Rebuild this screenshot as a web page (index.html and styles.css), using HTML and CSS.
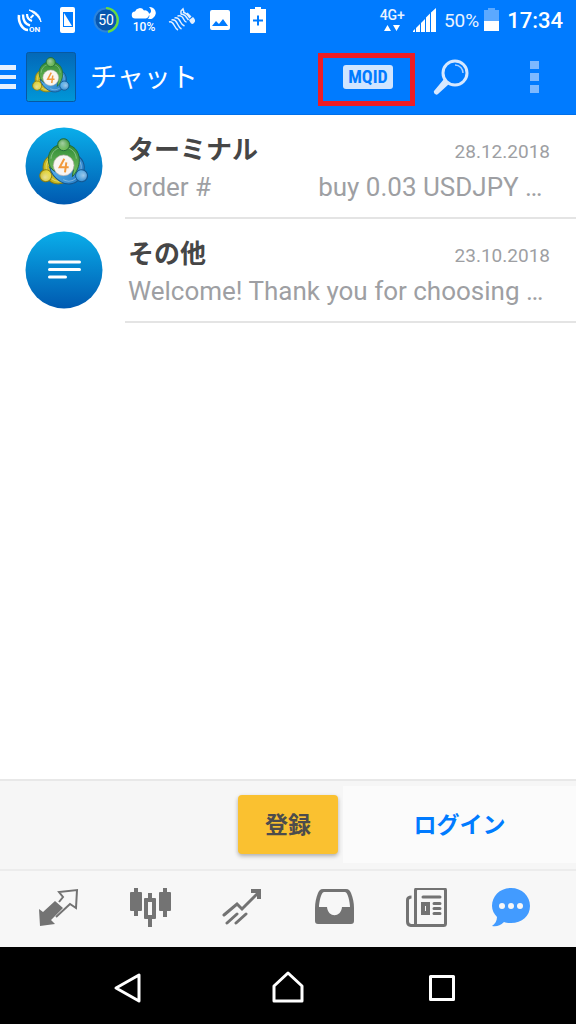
FILE: index.html
```html
<!DOCTYPE html>
<html lang="ja">
<head>
<meta charset="utf-8">
<meta name="viewport" content="width=device-width, initial-scale=1">
<title>チャット</title>
<link rel="stylesheet" href="styles.css">
</head>
<body>
<svg class="defs" aria-hidden="true">
  <defs>
    <linearGradient id="sky" x1="0" y1="0" x2="0" y2="1"><stop offset="0" stop-color="#0aaeea"/><stop offset="1" stop-color="#0059b0"/></linearGradient>
    <linearGradient id="tile" x1="0" y1="0" x2="0" y2="1"><stop offset="0" stop-color="#0368b8"/><stop offset="1" stop-color="#0097d8"/></linearGradient>
    <linearGradient id="green" x1="0" y1="0" x2="0" y2="1"><stop offset="0" stop-color="#2f8a35"/><stop offset="1" stop-color="#7cc563"/></linearGradient>
    <linearGradient id="yellow" x1="0" y1="0" x2="0" y2="1"><stop offset="0" stop-color="#c4b31a"/><stop offset="1" stop-color="#eee04a"/></linearGradient>
    <linearGradient id="blue" x1="0" y1="0" x2="0" y2="1"><stop offset="0" stop-color="#2a80c8"/><stop offset="1" stop-color="#5cb4ec"/></linearGradient>
    <radialGradient id="shine" cx=".4" cy=".35" r=".6"><stop offset="0" stop-color="#fff" stop-opacity=".5"/><stop offset="1" stop-color="#fff" stop-opacity="0"/></radialGradient>
    <g id="member">
      <path d="M74 20C46 18 28 38 28 64c0 15 7 28 18 35 2-24 12-39 28-39s30 14 29 36l-3 20c14-14 21-32 21-50 0-28-19-48-47-46z" stroke-width="3"/>
      <path d="M36 62c1-18 12-28 24-32M112 62c-1-18-12-28-24-32" fill="none" stroke="#fff" stroke-opacity=".35" stroke-width="3"/>
      <circle cx="74" cy="20" r="18" stroke-width="3"/>
      <circle cx="74" cy="20" r="16" fill="url(#shine)" stroke="none"/>
    </g>
    <symbol id="logo" viewBox="0 0 150 150">
      <use href="#member" fill="url(#yellow)" stroke="#8a7c16" transform="rotate(240 74 82)"/>
      <use href="#member" fill="url(#blue)" stroke="#14568f" transform="rotate(120 74 82)"/>
      <use href="#member" fill="url(#green)" stroke="#246b38"/>
      <circle cx="74" cy="82" r="31" fill="#f8f5f2" stroke="#b9b0ac" stroke-width="2"/>
      <path d="M76 62L62 88h27M82 73l-4 30" fill="none" stroke="#f19a3c" stroke-width="6"/>
    </symbol>
  </defs>
</svg>
<div class="screen">
  <header class="top">
    <div class="status">
      <div class="notices">
        <svg viewBox="0 0 26 28"><g fill="none" stroke="#fff"><path d="M2 9c-1 8 4 15 9 15" stroke-width="2.600"/><path d="M6 8.500c0 6 3 10 7 11" stroke-width="2.400"/><path d="M10 8c0 4 2 6 5 7" stroke-width="2.200"/><path d="M13.500 12l3-3" stroke-width="2"/></g><path fill="#fff" d="M12 4c7 1 11 5 12 12-2-5-7-9-12-12z" stroke="#fff"/><text x="12" y="26" class="tiny">ON</text></svg>
        <svg viewBox="0 0 26 28"><path fill="#fff" fill-rule="evenodd" d="M7 1h11a2 2 0 0 1 2 2v22a2 2 0 0 1-2 2H7a2 2 0 0 1-2-2V3a2 2 0 0 1 2-2zm1 5v15h10V6z"/><path fill="#fff" d="M9 7l8 13H9z"/></svg>
        <svg viewBox="0 0 26 28"><circle cx="13" cy="14" r="11.500" fill="#0757b0" stroke="#2b84dc" stroke-width="2"/><path d="M13 2a12 12 0 0 1 2 23.800" fill="none" stroke="#69dc3e" stroke-width="2.200"/><text x="13" y="19" text-anchor="middle" class="count">50</text></svg>
        <svg viewBox="0 0 26 28"><path fill="#fff" d="M4.500 12.500a3.500 3.500 0 0 1-.5-7 5 5 0 0 1 9-1 4 4 0 0 1 2 8z"/><path fill="#fff" d="M18 1a6 6 0 1 1-1.500 11.500c2-.5 2.500-3 1-4.500 3-1 3.500-4 .500-7z"/><text x="13" y="25" text-anchor="middle" class="rain">10%</text></svg>
        <svg viewBox="0 0 26 28"><g fill="none" stroke="#e2efff" stroke-width="1.500"><path d="M0 16c3-1 4 1 5 3s2 4 4 5M2.500 14c4-1 5 2 6 4s2 4 4 5M5.500 12c4-1 5 2 6 4s2 3 4 4M8.500 10c4-1 5 1 6 3s2 3 3 3M11.500 8c3 0 4 1 5 2l3 4M14 6c3 1 5 3 7 6M12 8V5l2-2 1 3M18 7l4 4"/></g><path fill="#e2efff" d="M20 14l4-3c2 2 3 4 1 6s-3 1-5-3z"/></svg>
        <svg viewBox="0 0 26 28"><path fill="#fff" fill-rule="evenodd" d="M5 4h16a2 2 0 0 1 2 2v16a2 2 0 0 1-2 2H5a2 2 0 0 1-2-2V6a2 2 0 0 1 2-2zm0 16h16l-5-7-4 5-3-3z"/></svg>
        <svg viewBox="0 0 26 28"><path fill="#fff" fill-rule="evenodd" d="M10 1h6v2h5v24H5V3h5zm2 8.500v4H8v2h4v4h2v-4h4v-2h-4v-4z"/></svg>
      </div>
      <div class="system">
        <div class="network"><span>4G+</span><svg viewBox="0 0 18 8"><path fill="#fff" d="M1 7l3.500-6L8 7zM10 1h7l-3.500 6z"/></svg></div>
        <svg class="signal" viewBox="0 0 23 24"><path fill="#fff" d="M0 24v-1l2-2v3zM3 24v-4l4-4v8zM8 24v-9l4-4v13zM13 24V9.500l4-4V24zM18 24V4.500L23 0v24z"/></svg>
        <span class="percent">50%</span>
        <svg class="battery" viewBox="0 0 15 24"><path fill="#5ca9ff" d="M4 0h7v2h4v11H0V2h4z"/><path fill="#fff" d="M0 13h15v10H0z"/></svg>
        <time class="clock">17:34</time>
      </div>
    </div>
    <div class="appbar">
      <button class="menu" aria-label="メニュー"><svg viewBox="0 0 16 24"><path fill="#e4f0ff" d="M0 0h16v5H0zM0 10h16v4H0zM0 19h16v5H0z"/></svg></button>
      <svg class="app-icon" viewBox="0 0 50 50"><rect x=".5" y=".5" width="49" height="49" rx="2" fill="url(#tile)" stroke="#0759a2"/><use href="#logo" x="6" y="5" width="38" height="38"/></svg>
      <h1>チャット</h1>
      <button class="mqid"><span>MQID</span></button>
      <button class="search" aria-label="検索"><svg viewBox="0 0 36 36"><circle cx="22" cy="14" r="12" fill="none" stroke="#d6e8ff" stroke-width="3"/><path d="M22 6c5 0 8 4 8 8" fill="none" stroke="#a9d0ff" stroke-width="1.500"/><path fill="#d6e8ff" d="M11 20l5 5L5 35c-2 2-5-1-4-3z"/></svg></button>
      <button class="more" aria-label="その他のオプション"><svg viewBox="0 0 9 32"><path fill="#7db9ff" d="M0 0h9v8H0zM0 12h9v8H0zM0 24h9v8H0z"/></svg></button>
    </div>
  </header>
  <main>
    <a class="chat" href="#terminal">
      <svg class="avatar" viewBox="0 0 78 78"><circle cx="39" cy="39" r="38.500" fill="url(#sky)"/><use href="#logo" x="14" y="11" width="50" height="50"/></svg>
      <div class="body">
        <div class="line"><h2>ターミナル</h2><time>28.12.2018</time></div>
        <p>order #<span class="hidden-number"></span>buy 0.03 USDJPY …</p>
      </div>
    </a>
    <a class="chat" href="#other">
      <svg class="avatar" viewBox="0 0 78 78"><circle cx="39" cy="39" r="38.500" fill="url(#sky)"/><path d="M24.500 31h30M24.500 38.500h30M24.500 46h16" stroke="#fff" stroke-width="3" stroke-linecap="round"/></svg>
      <div class="body">
        <div class="line"><h2>その他</h2><time>23.10.2018</time></div>
        <p>Welcome! Thank you for choosing …</p>
      </div>
    </a>
  </main>
  <div class="account">
    <button class="register">登録</button>
    <button class="login">ログイン</button>
  </div>
  <nav class="tabs">
    <a href="#quotes" aria-label="気配値"><svg viewBox="0 0 42 42"><path fill="#737373" d="M1 20l4 3 12-11 8 7-12 12 4 4-15 2z" transform="translate(0 1)"/><path fill="none" stroke="#737373" stroke-width="2" d="M21 14l4-5-4-5 18-2-1 18-6-4-14 13"/></svg></a>
    <a href="#charts" aria-label="チャート"><svg viewBox="0 0 42 42"><path fill="#737373" fill-rule="evenodd" d="M4 0h4v4h3q1 0 1 1v17q0 1-1 1H8v5H4v-5H1q-1 0-1-1V5q0-1 1-1h3zM33 0h4v4h3q1 0 1 1v17q0 1-1 1h-3v6h-4v-6h-3q-1 0-1-1V5q0-1 1-1h3zM18 5h4v5h3q1 0 1 1v19q0 1-1 1h-3v8h-4v-8h-3q-1 0-1-1V11q0-1 1-1h3zm0 9v13h4V14z"/></svg></a>
    <a href="#trade" aria-label="トレード"><svg viewBox="0 0 42 42"><g fill="none" stroke="#737373" stroke-width="3" stroke-linecap="round"><path d="M2 27l13-11 5 5L37 4M5 35l10-9M14 35l10-9"/><path stroke-linecap="butt" stroke-width="4" d="M29 3h8v8"/></g></svg></a>
    <a href="#history" aria-label="履歴"><svg viewBox="0 0 42 42"><path fill="#737373" fill-rule="evenodd" d="M9 1h23c3 0 4 2 5 4 2 5 3 10 3 15v13a3 3 0 0 1-3 3H4a3 3 0 0 1-3-3V20C1 15 2 10 4 5c1-2 2-4 5-4zm1 3C7 4 5 15 5 19h8c1 11 14 11 15 0h8c0-4-2-15-5-15z"/></svg></a>
    <a href="#news" aria-label="ニュース"><svg viewBox="0 0 42 42"><g fill="none" stroke="#737373" stroke-width="3"><path d="M9.500 2.500a2 2 0 0 1 2-2h26a2 2 0 0 1 2 2v33a2 2 0 0 1-2 2H5a4 4 0 0 1-3.500-4V12c0-2 2-3 4-3M9.500 2v36"/><path stroke-linecap="round" d="M17 9h17M28 15.500h6M28 20.500h6M28 25.500h6"/><path stroke-width="4" d="M17 16h5v9h-5z"/></g></svg></a>
    <a href="#chat" aria-label="チャット" aria-current="page"><svg viewBox="0 0 42 42"><path fill="#429bff" d="M21 0c11 0 19 8 19 18S32 35 21 35c-3 0-5 0-7-1-4 4-8 5-12 4 3-2 5-5 5-9C4 26 2 22 2 18 2 8 10 0 21 0z"/><g fill="#f7f7f7"><circle cx="12" cy="18" r="3"/><circle cx="21" cy="18" r="3"/><circle cx="30" cy="18" r="3"/></g></svg></a>
  </nav>
  <div class="android">
    <button aria-label="戻る"><svg viewBox="0 0 34 34"><path d="M28 4v26L5 17z"/></svg></button>
    <button aria-label="ホーム"><svg viewBox="0 0 34 34"><path d="M17 2L31 15v15H3V15z"/></svg></button>
    <button aria-label="最近のアプリ"><svg viewBox="0 0 34 34"><path d="M5.500 5.500h23v23h-23z"/></svg></button>
  </div>
</div>
</body>
</html>
```
FILE: styles.css
```css
* { box-sizing: border-box; }
body {
  margin: 0;
  background: #fff;
  font-family: Roboto, "Noto Sans CJK JP", sans-serif;
}
h1, h2, p { margin: 0; }
svg { display: block; flex: none; }
button { padding: 0; border: 0; background: none; font: inherit; color: inherit; cursor: pointer; }
a { color: inherit; text-decoration: none; }
.defs { position: absolute; width: 0; height: 0; }
.screen { display: flex; flex-direction: column; min-height: 100vh; }

.top { background: #007bff; color: #fff; border-bottom: 1px solid #0070ea; }
.status { display: flex; justify-content: space-between; align-items: center; height: 40px; padding: 0 13px 0 11px; }
.notices { display: flex; }
.notices svg { width: 38px; height: 28px; }
.tiny { font-size: 8px; font-weight: 700; fill: #fff; }
.count { font-size: 14px; fill: #fff; }
.rain { font-size: 12px; font-weight: 500; fill: #fff; }
.system { display: flex; align-items: center; gap: 8px; color: #eaf3ff; }
.network { display: flex; flex-direction: column; align-items: center; font-size: 14px; line-height: 14px; font-weight: 500; }
.network svg { width: 18px; height: 8px; margin-top: 2px; }
.signal { width: 23px; height: 24px; }
.percent { font-size: 19px; }
.battery { width: 15px; height: 24px; margin-left: -3px; }
.clock { font-size: 22px; font-weight: 500; color: #fff; }

.appbar { display: flex; align-items: center; height: 74px; }
.menu svg { width: 16px; height: 24px; }
.app-icon { width: 50px; height: 50px; margin-left: 10px; }
.appbar h1 { flex: 1; margin-left: 14px; padding-top: 2px; font-size: 27px; line-height: 40px; font-weight: 400; }
.mqid { margin-top: 4px; padding: 7px 17px 12px 20px; border: 5px solid #ed1c24; }
.mqid span {
  display: block;
  width: 50px;
  border-radius: 3px;
  background: #d0e5ff;
  color: #007bff;
  font-family: "Roboto Condensed", Roboto, sans-serif;
  font-size: 18px;
  line-height: 24px;
  font-weight: 700;
}
.search { margin-left: 18px; }
.search svg { width: 36px; height: 36px; }
.more { margin: 0 37px 0 61px; }
.more svg { width: 9px; height: 32px; }

main { flex: 1; }
.chat { display: flex; height: 104px; padding-left: 25px; }
.avatar { width: 78px; height: 78px; margin-top: 12px; }
.body { flex: 1; min-width: 0; margin-left: 22px; padding: 14px 26px 0 3px; border-bottom: 2px solid #e4e4e4; }
.line { display: flex; justify-content: space-between; align-items: center; height: 40px; }
.chat h2 { padding-top: 2px; font-size: 26px; line-height: 40px; font-weight: 700; color: #464646; }
.chat time { padding-top: 5px; font-size: 19px; color: #9e9fa3; }
.chat p { font-size: 26px; line-height: 36px; color: #9e9fa3; white-space: nowrap; }
.hidden-number { display: inline-block; width: 107px; }

.account { display: flex; height: 90px; border-top: 2px solid #e8e8e8; background: #f6f6f6; }
.account button { padding-bottom: 4px; font-size: 23px; font-weight: 700; }
.register {
  width: 100px;
  height: 59px;
  margin: 14px 5px 0 auto;
  border-radius: 4px;
  background: #fac130;
  box-shadow: 0 2px 4px #0000004d;
  color: #4c4c4c;
}
.login { width: 233px; height: 77px; margin-top: 5px; background: #fbfbfb; color: #007bff; }

.tabs {
  display: grid;
  grid-template-columns: repeat(5, 92fr) 76fr;
  justify-items: center;
  height: 78px;
  padding: 17px 27px 0 13px;
  border-top: 2px solid #ececec;
  background: #f7f7f7;
}
.tabs svg { width: 42px; height: 42px; }

.android { display: grid; grid-template-columns: 160fr 160fr 148fr; justify-items: center; height: 77px; padding: 4px 60px 0 48px; background: #000; }
.android svg { width: 34px; height: 34px; fill: none; stroke: #fff; stroke-width: 3; stroke-linejoin: round; }
```
